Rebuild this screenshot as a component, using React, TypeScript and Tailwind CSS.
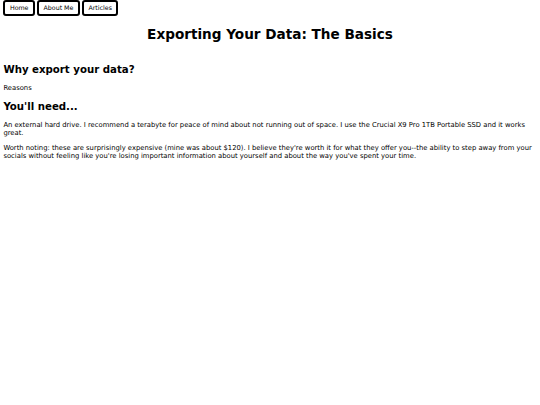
export default function App() {
  const btn = "border-2 border-black rounded-[3px] bg-white px-[4.5px] h-[16px] text-[6.3px] leading-none text-black";
  return (
    <div className="bg-white text-black min-h-[405px] px-[3.4px]" style={{ fontFamily: '"DejaVu Sans", Verdana, sans-serif' }}>
      <nav className="flex gap-[2px]">
        <button className={btn}>Home</button>
        <button className={btn}>About Me</button>
        <button className={btn}>Articles</button>
      </nav>
      <h1 className="text-center font-bold text-[13.6px] leading-[16px] mt-[10px]">Exporting Your Data: The Basics</h1>
      <h2 className="font-bold text-[10.2px] leading-[12px] mt-[21.5px]">Why export your data?</h2>
      <p className="text-[6.8px] leading-[8px] mt-[8.5px]">Reasons</p>
      <h2 className="font-bold text-[10.2px] leading-[12px] mt-[8.5px]">You'll need...</h2>
      <p className="text-[6.8px] leading-[8px] mt-[8.5px]">An external hard drive. I recommend a terabyte for peace of mind about not running out of space. I use the Crucial X9 Pro 1TB Portable SSD and it works great.</p>
      <p className="text-[6.8px] leading-[8px] mt-[6.8px]">Worth noting: these are surprisingly expensive (mine was about $120). I believe they're worth it for what they offer you--the ability to step away from your socials without feeling like you're losing important information about yourself and about the way you've spent your time.</p>
    </div>
  );
}
